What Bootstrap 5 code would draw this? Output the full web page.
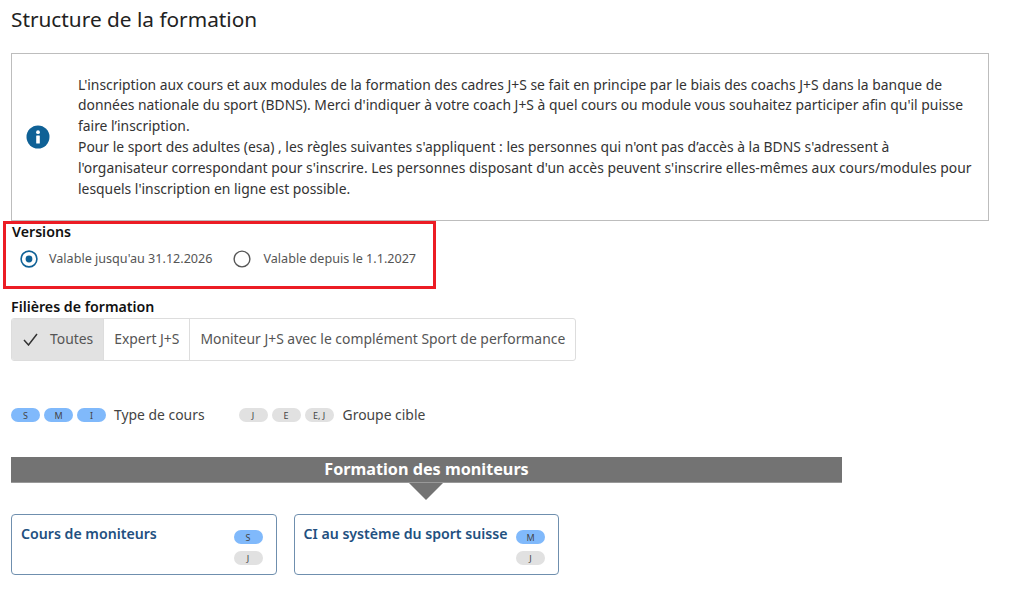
<!DOCTYPE html>
<html lang="fr">
<head>
  <meta charset="UTF-8" />
  <meta name="viewport" content="width=device-width, initial-scale=1.0"/>
  <title>Structure de la formation</title>
  <link href="https://cdn.jsdelivr.net/npm/bootstrap@5.3.3/dist/css/bootstrap.min.css" rel="stylesheet" />
  <style>
    body { font-family: "Noto Sans", sans-serif; color: #222; background: #fff; overflow: hidden; }
    .page-wrap { padding: 5px 0 0 11px; width: 1024px; }
    .page-title { font-size: 20.8px; font-weight: 400; line-height: 28px; margin: 0 0 20px; }
    .info-box { width: 978px; height: 168px; border: 1px solid #bdbdbd; padding-left: 15px; padding-right: 12px; }
    .info-icon { width: 24px; height: 24px; flex: none; margin-right: 28px; margin-left: -1px; }
    .info-text { font-size: 13.88px; line-height: 20.8px; color: #333; }
    .version-box { width: 433px; height: 68px; margin-left: -8px; border: 3px solid #ec1c24; padding: 0 0 0 6px; }
    .field-title { font-size: 14.2px; font-weight: 600; line-height: 18px; color: #111; }
    .version-box .field-title { margin-top: -1px; }
    .radio-row { padding-left: 8px; margin-top: 9px; gap: 21px; font-size: 12.6px; color: #555; line-height: 18px; }
    .radio-dot { width: 18px; height: 18px; flex: none; margin-right: 11px; }
    .radio-dot-off { margin-right: 12px; }
    .filter-title { margin-top: 9px; }
    .filter-group { margin-top: 2px; height: 43px; width: 565px; border: 1px solid #ddd; border-radius: 3px; font-size: 13.9px; color: #555; overflow: hidden; white-space: nowrap; }
    .filter-item { padding: 0 10px; border-right: 1px solid #ddd; }
    .filter-item:last-child { border-right: 0; }
    .filter-item.is-on { background: #e2e2e2; padding-left: 11px; }
    .tick { width: 15px; height: 13px; margin-right: 12px; }
    .legend-row { margin-top: 44px; height: 20px; font-size: 13.9px; color: #444; }
    .pill { display: inline-flex; align-items: center; justify-content: center; width: 29px; height: 14px; border-radius: 7px; font-size: 9px; line-height: 1; color: #444; }
    .pill-blue { background: #80b9fb; }
    .pill-grey { background: #e1e1e1; }
    .legend-pills { gap: 4px; margin-right: 9px; }
    .legend-pills:first-child { margin-right: 8px; }
    .legend-second { margin-left: 34px; }
    .banner { margin-top: 32px; width: 831px; height: 26px; background: #737373; color: #fff; font-size: 16.2px; font-weight: 700; line-height: 24px; text-align: center; border-bottom: 1px solid #999; position: relative; }
    .banner::after { content: ""; position: absolute; left: 398px; top: 26px; border-left: 17px solid transparent; border-right: 17px solid transparent; border-top: 17px solid #737373; }
    .course-row { margin-top: 31px; gap: 17px; }
    .course-box { width: 265.5px; height: 61px; border: 1px solid #6f8fae; border-radius: 4px; padding: 9px 13px 0 9px; }
    .course-name { font-size: 14.15px; font-weight: 600; line-height: 20px; color: #22507f; white-space: nowrap; }
    .course-pills { gap: 7px; padding-top: 6px; }
  </style>
</head>
<body>
  <div class="page-wrap">
    <h1 class="page-title">Structure de la formation</h1>

    <div class="info-box d-flex align-items-center">
      <svg class="info-icon" viewBox="0 0 24 24">
        <circle cx="12" cy="12" r="11.5" fill="#0f6196"/>
        <circle cx="12" cy="7.2" r="1.9" fill="#fff"/>
        <rect x="10.2" y="10.4" width="3.6" height="8.2" rx=".5" fill="#fff"/>
      </svg>
      <div class="info-text">
        L'inscription aux cours et aux modules de la formation des cadres J+S se fait en principe par le biais des coachs J+S dans la banque de données nationale du sport (BDNS). Merci d'indiquer à votre coach J+S à quel cours ou module vous souhaitez participer afin qu'il puisse faire l’inscription.<br>
        Pour le sport des adultes (esa) , les règles suivantes s'appliquent : les personnes qui n'ont pas d’accès à la BDNS s'adressent à l'organisateur correspondant pour s'inscrire. Les personnes disposant d'un accès peuvent s'inscrire elles-mêmes aux cours/modules pour lesquels l'inscription en ligne est possible.
      </div>
    </div>

    <div class="version-box">
      <div class="field-title">Versions</div>
      <div class="radio-row d-flex align-items-center">
        <div class="d-flex align-items-center">
          <svg class="radio-dot" viewBox="0 0 18 18"><circle cx="9" cy="9" r="7.9" fill="none" stroke="#0f6196" stroke-width="1.6"/><circle cx="9" cy="9" r="3.4" fill="#0f6196"/></svg>
          <span>Valable jusqu'au 31.12.2026</span>
        </div>
        <div class="d-flex align-items-center">
          <svg class="radio-dot radio-dot-off" viewBox="0 0 18 18"><circle cx="9" cy="9" r="7.9" fill="none" stroke="#555" stroke-width="1.4"/></svg>
          <span>Valable depuis le 1.1.2027</span>
        </div>
      </div>
    </div>

    <div class="field-title filter-title">Filières de formation</div>
    <div class="filter-group d-flex">
      <div class="filter-item is-on d-flex align-items-center">
        <svg class="tick" viewBox="0 0 15 13"><path d="M1 7l4.5 5L14 1" fill="none" stroke="#333" stroke-width="1.5"/></svg>
        Toutes
      </div>
      <div class="filter-item d-flex align-items-center">Expert J+S</div>
      <div class="filter-item d-flex align-items-center">Moniteur J+S avec le complément Sport de performance</div>
    </div>

    <div class="legend-row d-flex align-items-center">
      <div class="legend-pills d-flex">
        <span class="pill pill-blue">S</span><span class="pill pill-blue">M</span><span class="pill pill-blue">I</span>
      </div>
      <span>Type de cours</span>
      <div class="legend-pills legend-second d-flex">
        <span class="pill pill-grey">J</span><span class="pill pill-grey">E</span><span class="pill pill-grey">E, J</span>
      </div>
      <span>Groupe cible</span>
    </div>

    <div class="banner">Formation des moniteurs</div>

    <div class="course-row d-flex">
      <div class="course-box d-flex justify-content-between">
        <div class="course-name">Cours de moniteurs</div>
        <div class="course-pills d-flex flex-column"><span class="pill pill-blue">S</span><span class="pill pill-grey">J</span></div>
      </div>
      <div class="course-box d-flex justify-content-between">
        <div class="course-name">CI au système du sport suisse</div>
        <div class="course-pills d-flex flex-column"><span class="pill pill-blue">M</span><span class="pill pill-grey">J</span></div>
      </div>
    </div>
  </div>
  <script src="https://cdn.jsdelivr.net/npm/bootstrap@5.3.3/dist/js/bootstrap.bundle.min.js"></script>
</body>
</html>
